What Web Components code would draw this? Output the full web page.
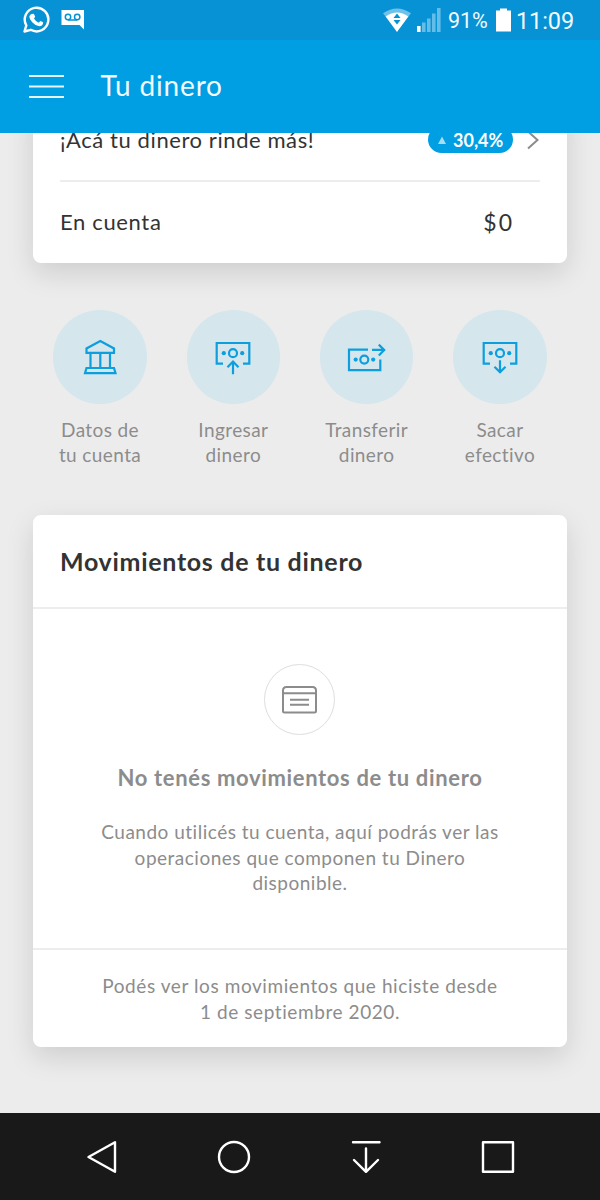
<!DOCTYPE html>
<html lang="es">
<head>
<meta charset="utf-8">
<title>Tu dinero</title>
<style>
  body {
    margin: 0;
    background: #ececec;
    font-family: Lato, 'Open Sans', sans-serif;
  }
</style>
</head>
<body>
<money-app></money-app>

<script>
const ICONS = {
  bank: `<path d="M16.5 42.8 V38.5 L30.3 31 L44 38.5 V42.8Z M20.5 43 V57.5 M30.3 43 V57.5 M40 43 V57.5 M16.5 58 H44 L45.5 63.2 H15Z"/>`,
  deposit: `<path d="M20 53.6 H13.7 V33 H46.3 V53.6 H40 M30 64.2 V52 M24.5 57.3 L30 51.6 L35.5 57.3"/><circle cx="30" cy="43.2" r="4"/><circle class="dot" cx="20.8" cy="43.2" r="2.1"/><circle class="dot" cx="39.2" cy="43.2" r="2.1"/>`,
  transfer: `<path d="M31 39.6 H12 V60.1 H43.3 V49.5 M35 39.9 H47.5 M41.8 34.6 L47.2 39.9 L41.8 45.4"/><circle cx="27.3" cy="49.6" r="4"/><circle class="dot" cx="18.7" cy="49.6" r="2.1"/><circle class="dot" cx="36.2" cy="49.6" r="2.1"/>`,
  withdraw: `<path d="M20 53.6 H13.7 V33 H46.3 V53.6 H40 M30 50.2 V62 M24.5 56.8 L30 62.3 L35.5 56.8"/><circle cx="30" cy="43.2" r="4"/><circle class="dot" cx="20.8" cy="43.2" r="2.1"/><circle class="dot" cx="39.2" cy="43.2" r="2.1"/>`
};

class StatusBar extends HTMLElement {
  connectedCallback() {
    this.attachShadow({ mode: 'open' });
    this.shadowRoot.innerHTML = `
      <style>
        :host {
          display: flex;
          justify-content: space-between;
          height: 40px;
          padding: 0 26px 0 22px;
          box-sizing: border-box;
          background: #0692d4;
          color: #f2faff;
          font-family: Roboto, sans-serif;
        }
        div { display: flex; align-items: center; }
        svg { display: block; flex: none; }
        .level { font-size: 21.5px; margin-left: 7px; width: 41px; white-space: nowrap; letter-spacing: -0.1px; padding-top: 1px; }
        .battery { margin-left: 7px; }
        .clock { font-size: 23.5px; margin-left: 5px; width: 58px; white-space: nowrap; letter-spacing: -0.1px; padding-top: 1px; }
      </style>
      <div>
        <svg width="28" height="40" viewBox="0 0 28 40">
          <path d="M2.5 31.5 L4.3 25.4 A11.8 11.8 0 1 1 8.7 29.8Z" fill="none" stroke="#fff" stroke-width="2.4" stroke-linejoin="round"/>
          <path d="M9.5 14 L11.5 13.7 Q12.3 14.2 13.2 16.7 L12 18.6 Q13.7 21.5 16.6 22.8 L18.3 21 Q20.8 21.8 21.2 22.5 Q21 26 17.3 26.3 Q13.5 26 10.2 22.3 Q7.2 19 7.3 16.6 Q7.7 14.8 9.5 14Z" fill="#fff"/>
        </svg>
        <svg width="24" height="40" viewBox="0 0 24 40" style="margin-left:11px">
          <path d="M0.5 10 H23 V29.5 L18.5 25 H0.5Z" fill="#fff"/>
          <g fill="none" stroke="#0692d4" stroke-width="1.5">
            <circle cx="7" cy="17" r="2.7"/><circle cx="16.2" cy="17" r="2.7"/>
            <path d="M7 20 H16.2"/>
          </g>
        </svg>
      </div>
      <div>
        <svg width="28" height="40" viewBox="0 0 28 40">
          <path d="M0 13.3 Q14 3.5 28 13.3 L25 17 Q14 9 3 17Z" fill="#6fc1ea"/>
          <path d="M2.6 16.5 Q14 8.5 25.4 16.5 L14 32Z" fill="#fff"/>
          <path d="M10.5 18 L14 13.5 L17.5 18Z M10.5 20 H17.5 L14 24.5Z" fill="#0692d4"/>
        </svg>
        <svg width="24" height="40" viewBox="0 0 24 40" style="margin-left:6px">
          <path d="M0 26 H3.6 V32 H0Z" fill="#fff"/>
          <path d="M5 22.5 H8.6 V32 H5Z M10 18.5 H13.6 V32 H10Z M15 13.5 H18.6 V32 H15Z M20 8 H23.6 V32 H20Z" fill="#64bce8"/>
        </svg>
        <span class="level">91%</span>
        <svg class="battery" width="15" height="40" viewBox="0 0 15 40">
          <path d="M4 8.5 H11 V10.5 H15 V31.5 H0 V10.5 H4Z" fill="#fff"/>
        </svg>
        <span class="clock">11:09</span>
      </div>`;
  }
}
customElements.define('status-bar', StatusBar);

class AppHeader extends HTMLElement {
  connectedCallback() {
    this.attachShadow({ mode: 'open' });
    this.shadowRoot.innerHTML = `
      <style>
        :host {
          display: flex;
          align-items: center;
          gap: 36.5px;
          height: 93px;
          padding: 0 0 2px 29px;
          box-sizing: border-box;
          background: #009ee3;
          color: #f2faff;
          font-size: 28px;
          letter-spacing: 0.85px;
        }
        span { padding-bottom: 1px; }
      </style>
      <svg width="35" height="26" viewBox="0 0 35 26" fill="none" stroke="#e6f5fc" stroke-width="2">
        <path d="M0 3 H35 M0 13.5 H35 M0 24 H35"/>
      </svg>
      <span><slot></slot></span>`;
  }
}
customElements.define('app-header', AppHeader);

class MoneyCard extends HTMLElement {
  connectedCallback() {
    this.attachShadow({ mode: 'open' });
    this.shadowRoot.innerHTML = `
      <style>
        :host {
          display: block;
          margin: 0 33.3px;
          background: #fff;
          border-radius: 8px;
          box-shadow: 0 10px 28px rgba(0, 0, 0, 0.13);
        }
      </style>
      <slot></slot>`;
  }
}
customElements.define('money-card', MoneyCard);

class BalanceRow extends HTMLElement {
  connectedCallback() {
    this.attachShadow({ mode: 'open' });
    this.shadowRoot.innerHTML = `
      <style>
        :host {
          display: flex;
          align-items: center;
          height: 81px;
          margin: 0 26.7px;
          padding-bottom: 2px;
          box-sizing: border-box;
          color: #333;
          font-size: 22px;
        }
        :host([divider]) {
          height: 83px;
          padding-bottom: 0;
          border-bottom: 2px solid #ededed;
        }
        .label { flex: 1; white-space: nowrap; }
      </style>
      <span class="label"><slot></slot></span>
      <slot name="value"></slot>`;
  }
}
customElements.define('balance-row', BalanceRow);

class RatePill extends HTMLElement {
  connectedCallback() {
    this.attachShadow({ mode: 'open' });
    this.shadowRoot.innerHTML = `
      <style>
        :host {
          display: flex;
          align-items: center;
          gap: 14px;
        }
        .pill {
          display: flex;
          align-items: center;
          gap: 7px;
          width: 85px;
          height: 27px;
          padding-left: 10px;
          box-sizing: border-box;
          border-radius: 14px;
          background: #009ee3;
          color: #fff;
          font-size: 18px;
          font-weight: 700;
        }
      </style>
      <span class="pill">
        <svg width="8" height="8" viewBox="0 0 8 8"><path d="M0 8 L4 0.5 L8 8Z" fill="#a6dcf5"/></svg>
        <slot></slot>
      </span>
      <svg width="13" height="20" viewBox="0 0 13 20" fill="none" stroke="#8c8c8c" stroke-width="2"><path d="M1 1.5 L10.5 10 L1 18.5"/></svg>`;
  }
}
customElements.define('rate-pill', RatePill);

class ActionButton extends HTMLElement {
  connectedCallback() {
    this.attachShadow({ mode: 'open' });
    this.shadowRoot.innerHTML = `
      <style>
        :host {
          display: flex;
          flex-direction: column;
          align-items: center;
          color: #8c8c8c;
          font-size: 19px;
          line-height: 25.5px;
          letter-spacing: 0.4px;
          text-align: center;
        }
        .disc {
          width: 93.5px;
          height: 93.5px;
          margin-bottom: 13px;
          border-radius: 50%;
          background: #d5e6ed;
          display: grid;
          place-items: center;
        }
        svg { fill: none; stroke: #0d9fdd; stroke-width: 2.2; }
        .dot { fill: #0d9fdd; stroke: none; }
      </style>
      <span class="disc"><svg width="60" height="94" viewBox="0 0 60 94">${ICONS[this.getAttribute('icon')]}</svg></span>
      <span><slot></slot></span>`;
  }
}
customElements.define('action-button', ActionButton);

class EmptyMovements extends HTMLElement {
  connectedCallback() {
    this.attachShadow({ mode: 'open' });
    this.shadowRoot.innerHTML = `
      <style>
        :host {
          display: block;
          height: 532px;
          color: #8c8c8c;
          text-align: center;
          font-size: 19px;
          line-height: 25.5px;
        }
        h2 {
          margin: 0;
          height: 94px;
          padding: 0 26.7px;
          box-sizing: border-box;
          border-bottom: 2px solid #ededed;
          color: #333;
          font-size: 25px;
          font-weight: 700;
          letter-spacing: 0.7px;
          line-height: 92px;
          text-align: left;
        }
        .body {
          display: flex;
          flex-direction: column;
          align-items: center;
          height: 341px;
          padding-top: 55px;
          box-sizing: border-box;
          border-bottom: 2px solid #ededed;
        }
        .ring {
          display: grid;
          place-items: center;
          width: 71px;
          height: 71px;
          margin-right: 1px;
          box-sizing: border-box;
          border: 1.5px solid #dedede;
          border-radius: 50%;
        }
        h3 {
          margin: 29px 0 27px;
          font-size: 22px;
          font-weight: 700;
          letter-spacing: 0.65px;
          line-height: 28px;
        }
        p { margin: 0; white-space: nowrap; letter-spacing: 0.5px; }
        .note { padding-top: 23px; letter-spacing: 0.58px; }
      </style>
      <h2><slot name="title"></slot></h2>
      <div class="body">
        <span class="ring">
          <svg width="35" height="28" viewBox="0 0 35 28" fill="none" stroke="#8c8c8c" stroke-width="2">
            <path d="M1 7 V4.5 Q1 1 4.5 1 H30.5 Q34 1 34 4.5 V25 Q34 26.5 32.5 26.5 H2.5 Q1 26.5 1 25Z M1 7.2 H34 M8 13.8 H27 M8 18.8 H27"/>
          </svg>
        </span>
        <h3><slot name="message"></slot></h3>
        <p><slot name="detail"></slot></p>
      </div>
      <p class="note"><slot name="note"></slot></p>`;
  }
}
customElements.define('empty-movements', EmptyMovements);

class NavBar extends HTMLElement {
  connectedCallback() {
    this.attachShadow({ mode: 'open' });
    this.shadowRoot.innerHTML = `
      <style>
        :host {
          display: grid;
          grid-template-columns: repeat(4, 132px);
          justify-content: center;
          align-items: center;
          height: 87px;
          background: #191919;
        }
        svg {
          justify-self: center;
          fill: none;
          stroke: #fff;
          stroke-width: 2.4;
          stroke-linejoin: round;
          stroke-linecap: round;
        }
      </style>
      <svg width="36" height="36" viewBox="0 0 36 36"><path d="M31 3.2 V32.8 L4.5 18Z"/></svg>
      <svg width="36" height="36" viewBox="0 0 36 36"><circle cx="18" cy="18" r="15"/></svg>
      <svg width="36" height="36" viewBox="0 0 36 36"><path d="M5 3.2 H31.5 M18 9.5 V32.5 M6 21 L18 32.8 L30 21"/></svg>
      <svg width="36" height="36" viewBox="0 0 36 36"><path d="M3 3.2 H33 V32.8 H3Z"/></svg>`;
  }
}
customElements.define('nav-bar', NavBar);

class MoneyApp extends HTMLElement {
  connectedCallback() {
    this.attachShadow({ mode: 'open' });
    this.shadowRoot.innerHTML = `
      <style>
        :host {
          display: flex;
          flex-direction: column;
          width: 600px;
          height: 1200px;
          overflow: hidden;
        }
        main {
          flex: 1;
          min-height: 0;
          overflow: hidden;
        }
        /* the list is scrolled, so the first card starts under the header */
        .balance { margin-top: -34px; }
        .actions {
          display: grid;
          grid-template-columns: repeat(4, 133.3px);
          justify-content: center;
          margin: 47px 0 47.5px;
        }
        .promo { letter-spacing: 0.58px; }
        .account { letter-spacing: 0.65px; }
        .amount { margin-right: 26px; font-size: 23px; letter-spacing: 2px; }
      </style>
      <status-bar></status-bar>
      <app-header>Tu dinero</app-header>
      <main>
        <money-card class="balance">
          <balance-row divider><span class="promo">¡Acá tu dinero rinde más!</span><rate-pill slot="value">30,4%</rate-pill></balance-row>
          <balance-row><span class="account">En cuenta</span><span class="amount" slot="value">$0</span></balance-row>
        </money-card>
        <div class="actions">
          <action-button icon="bank">Datos de<br>tu cuenta</action-button>
          <action-button icon="deposit">Ingresar<br>dinero</action-button>
          <action-button icon="transfer">Transferir<br>dinero</action-button>
          <action-button icon="withdraw">Sacar<br>efectivo</action-button>
        </div>
        <money-card>
          <empty-movements>
            <span slot="title">Movimientos de tu dinero</span>
            <span slot="message">No tenés movimientos de tu dinero</span>
            <span slot="detail">Cuando utilicés tu cuenta, aquí podrás ver las<br>operaciones que componen tu Dinero<br>disponible.</span>
            <span slot="note">Podés ver los movimientos que hiciste desde<br>1 de septiembre 2020.</span>
          </empty-movements>
        </money-card>
      </main>
      <nav-bar></nav-bar>`;
  }
}
customElements.define('money-app', MoneyApp);
</script>
</body>
</html>
